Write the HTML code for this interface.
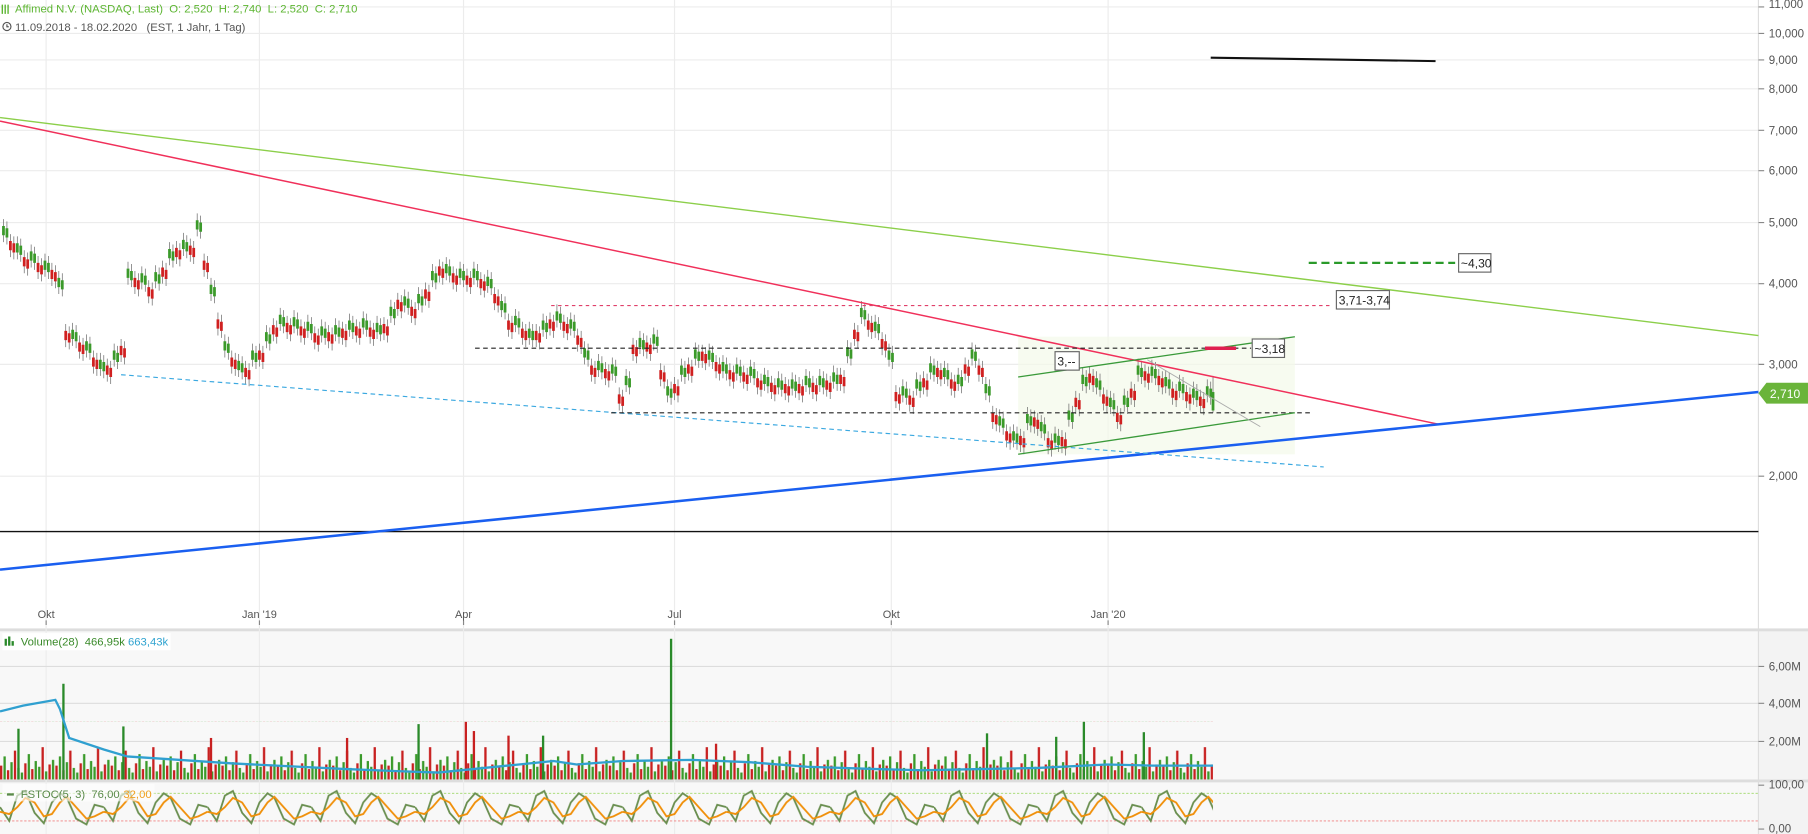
<!DOCTYPE html>
<html><head><meta charset="utf-8"><style>
html,body{margin:0;padding:0;background:#fff;overflow:hidden}
svg{display:block;font-family:"Liberation Sans",Arial,sans-serif}
</style></head><body>
<svg width="1808" height="834" viewBox="0 0 1568 723.3" xmlns="http://www.w3.org/2000/svg">
<defs>
<pattern id="vp" patternUnits="userSpaceOnUse" x="0" y="626" width="48" height="50">
<g fill="#c82020"><rect x="0" y="38" width="2" height="12"/><rect x="6" y="42" width="2" height="8"/><rect x="12" y="25" width="2" height="25"/><rect x="21" y="36" width="2" height="14"/><rect x="27" y="41" width="2" height="9"/><rect x="36" y="22" width="2" height="28"/><rect x="42" y="37" width="2" height="13"/></g>
<g fill="#3a9a2a"><rect x="3" y="30" width="2" height="20"/><rect x="9" y="35" width="2" height="15"/><rect x="15" y="40" width="2" height="10"/><rect x="18" y="44" width="2" height="6"/><rect x="24" y="28" width="2" height="22"/><rect x="30" y="34" width="2" height="16"/><rect x="33" y="39" width="2" height="11"/><rect x="39" y="43" width="2" height="7"/><rect x="45" y="33" width="2" height="17"/></g>
</pattern>
<pattern id="sp" patternUnits="userSpaceOnUse" x="0" y="678" width="90" height="46">
<path d="M0 22L8 34L15 12L22 8L30 27L38 36L45 18L52 10L58 14L66 32L75 37L82 20L90 22" fill="none" stroke="#6a8f50" stroke-width="1.6"/>
<path d="M0 26L8 28L15 22L22 14L30 18L38 30L45 28L52 18L58 13L66 22L75 32L82 30L90 26" fill="none" stroke="#f0900a" stroke-width="1.6"/>
</pattern>
</defs>
<rect x="0" y="0" width="1568" height="723.3" fill="#fff"/>
<rect x="0" y="547" width="1525" height="129" fill="#f8f8f8"/>
<rect x="0" y="678" width="1525" height="46" fill="#f8f8f8"/>
<rect x="1525" y="547" width="43" height="177" fill="#f3f3f3"/>
<rect x="0" y="545" width="1568" height="2.5" fill="#ddd"/>
<rect x="0" y="676" width="1568" height="2.5" fill="#ddd"/>
<line x1="1525" y1="0" x2="1525" y2="724" stroke="#ddd"/>
<g stroke="#ececec">
<line x1="0" y1="6" x2="1525" y2="6"/><line x1="0" y1="29" x2="1525" y2="29"/><line x1="0" y1="52" x2="1525" y2="52"/><line x1="0" y1="77" x2="1525" y2="77"/><line x1="0" y1="113" x2="1525" y2="113"/><line x1="0" y1="148" x2="1525" y2="148"/><line x1="0" y1="193" x2="1525" y2="193"/><line x1="0" y1="246" x2="1525" y2="246"/><line x1="0" y1="316" x2="1525" y2="316"/><line x1="0" y1="413" x2="1525" y2="413"/>
<line x1="40" y1="0" x2="40" y2="724"/><line x1="225" y1="0" x2="225" y2="724"/><line x1="402" y1="0" x2="402" y2="724"/><line x1="585" y1="0" x2="585" y2="724"/><line x1="773" y1="0" x2="773" y2="724"/><line x1="961" y1="0" x2="961" y2="724"/>
</g>
<g stroke="#ddd"><line x1="0" y1="578" x2="1525" y2="578"/><line x1="0" y1="610" x2="1525" y2="610"/><line x1="0" y1="643" x2="1525" y2="643"/></g>
<g font-size="9.5" fill="#555">
<g stroke="#888"><path d="M1525 6h5M1525 29h5M1525 52h5M1525 77h5M1525 113h5M1525 148h5M1525 193h5M1525 246h5M1525 316h5M1525 413h5M1525 578h5M1525 610h5M1525 643h5M1525 681h5M1525 719h5M40 538v4M225 538v4M402 538v4M585 538v4M773 538v4M961 538v4"/></g>
<g font-size="10"><text x="1534" y="7">11,000</text><text x="1534" y="32.5">10,000</text><text x="1534" y="55.5">9,000</text><text x="1534" y="80.5">8,000</text><text x="1534" y="116.5">7,000</text><text x="1534" y="151.5">6,000</text><text x="1534" y="196.5">5,000</text><text x="1534" y="249.5">4,000</text><text x="1534" y="319.5">3,000</text><text x="1534" y="416.5">2,000</text>
<text x="1534" y="581.5">6,00M</text><text x="1534" y="613.5">4,00M</text><text x="1534" y="646.5">2,00M</text><text x="1534" y="684">100,00</text><text x="1534" y="722">0,00</text></g>
<g text-anchor="middle"><text x="40" y="536">Okt</text><text x="225" y="536">Jan '19</text><text x="402" y="536">Apr</text><text x="585" y="536">Jul</text><text x="773" y="536">Okt</text><text x="961" y="536">Jan '20</text></g>
</g>
<rect x="0" y="626" width="1052" height="50" fill="url(#vp)"/>
<g fill="#2a8a2a"><rect x="54" y="593" width="2" height="83"/><rect x="581" y="554" width="2" height="122"/><rect x="106" y="630" width="2" height="46"/><rect x="362" y="628" width="2" height="48"/><rect x="855" y="636" width="2" height="40"/><rect x="939" y="626" width="2" height="50"/><rect x="991" y="635" width="2" height="41"/><rect x="15" y="632" width="2" height="44"/><rect x="470" y="638" width="2" height="38"/><rect x="915" y="639" width="2" height="37"/></g>
<g fill="#c82020"><rect x="403" y="626" width="2" height="50"/><rect x="410" y="634" width="2" height="42"/><rect x="182" y="640" width="2" height="36"/><rect x="300" y="640" width="2" height="36"/><rect x="440" y="638" width="2" height="38"/><rect x="620" y="645" width="2" height="31"/></g>
<path d="M0 617 L20 612 L48 607 L52 615 L60 640 L90 650 L110 656 L140 658 L200 662 L240 664 L300 667 L350 669 L380 670 L420 666 L450 663 L480 660 L500 663 L540 660 L600 659 L650 661 L700 665 L760 667 L800 668 L850 667 L900 666 L960 663 L1000 664 L1052 664" fill="none" stroke="#30a0d0" stroke-width="2"/>
<line x1="0" y1="688" x2="1525" y2="688" stroke="#9fd86a" stroke-dasharray="2,1.5" stroke-width=".8"/>
<line x1="0" y1="712" x2="1525" y2="712" stroke="#f08080" stroke-dasharray="2,1.5" stroke-width=".8"/>
<rect x="0" y="678" width="1052" height="46" fill="url(#sp)"/>
<rect x="883" y="292" width="240" height="102" fill="#f3f9ea" opacity=".7"/>
<g id="cd">
<path stroke="#666" stroke-width=".6" fill="none" d="M3 190v20M9 203v20M15 205v20M21 217v20M27 212v20M33 222v20M39 220v20M45 228v20M51 235v20M57 281v20M63 280v20M69 291v20M75 290v20M81 304v20M87 306v20M93 311v20M99 298v20M105 294v20M111 227v20M117 235v20M123 231v20M129 243v20M135 230v20M141 226v20M147 210v20M153 209v20M159 202v20M165 207v20M171 185v20M177 220v20M183 241v20M189 271v20M195 290v20M201 304v20M207 307v20M213 313v20M219 298v20M225 298v20M231 282v20M237 276v20M243 267v20M249 274v20M255 269v20M261 277v20M267 273v20M273 283v20M279 277v20M285 282v20M291 276v20M297 279v20M303 272v20M309 277v20M315 270v20M321 278v20M327 274v20M333 275v20M339 260v20M345 254v20M351 251v20M357 260v20M363 249v20M369 245v20M375 229v20M381 225v20M387 223v20M393 231v20M399 227v20M405 233v20M411 227v20M417 236v20M423 234v20M429 249v20M435 255v20M441 272v20M447 268v20M453 279v20M459 279v20M465 281v20M471 272v20M477 271v20M483 264v20M489 273v20M495 271v20M501 285v20M507 296v20M513 311v20M519 307v20M525 314v20M531 310v20M537 336v20M543 320v20M549 293v20M555 287v20M561 291v20M567 284v20M573 315v20M579 329v20M585 327v20M591 311v20M597 310v20M603 297v20M609 299v20M615 298v20M621 308v20M627 308v20M633 315v20M639 310v20M645 317v20M651 312v20M657 322v20M663 319v20M669 326v20M675 322v20M681 327v20M687 323v20M693 327v20M699 320v20M705 326v20M711 320v20M717 324v20M723 317v20M729 319v20M735 295v20M741 280v20M747 261v20M753 272v20M759 273v20M765 288v20M771 298v20M777 334v20M783 329v20M789 337v20M795 323v20M801 322v20M807 309v20M813 313v20M819 313v20M825 323v20M831 319v20M837 310v20M843 297v20M849 311v20M855 327v20M861 352v20M867 355v20M873 368v20M879 368v20M885 372v20M891 353v20M897 356v20M903 360v20M909 374v20M915 370v20M921 373v20M927 350v20M933 339v20M939 319v20M945 318v20M951 322v20M957 336v20M963 339v20M969 352v20M975 337v20M981 331v20M987 311v20M993 316v20M999 312v20M1005 320v20M1011 321v20M1017 331v20M1023 325v20M1029 334v20M1035 331v20M1041 338v20M1047 329v20"/>
<path stroke="#3b9a2a" stroke-width="2.4" fill="none" d="M3 196v8M15 211v8M27 218v8M39 226v8M51 241v8M63 286v8M75 296v8M87 312v8M99 304v8M111 233v8M123 237v8M135 236v8M147 216v8M159 208v8M171 191v8M183 247v8M195 296v8M207 313v8M219 304v8M231 288v8M243 273v8M255 275v8M267 279v8M279 283v8M291 282v8M303 278v8M315 276v8M327 280v8M339 266v8M351 257v8M363 255v8M375 235v8M387 229v8M399 233v8M411 233v8M423 240v8M435 261v8M447 274v8M459 285v8M471 278v8M483 270v8M495 277v8M507 302v8M519 313v8M531 316v8M543 326v8M555 293v8M567 290v8M579 335v8M591 317v8M603 303v8M615 304v8M627 314v8M639 316v8M651 318v8M663 325v8M675 328v8M687 329v8M699 326v8M711 326v8M723 323v8M735 301v8M747 267v8M759 279v8M771 304v8M783 335v8M795 329v8M807 315v8M819 319v8M831 325v8M843 303v8M855 333v8M867 361v8M879 374v8M891 359v8M903 366v8M915 376v8M927 356v8M939 325v8M951 328v8M963 345v8M975 343v8M987 317v8M999 318v8M1011 327v8M1023 331v8M1035 337v8M1047 335v8"/>
<path stroke="#d02020" stroke-width="2.4" fill="none" d="M9 209v8M21 223v8M33 228v8M45 234v8M57 287v8M69 297v8M81 310v8M93 317v8M105 300v8M117 241v8M129 249v8M141 232v8M153 215v8M165 213v8M177 226v8M189 277v8M201 310v8M213 319v8M225 304v8M237 282v8M249 280v8M261 283v8M273 289v8M285 288v8M297 285v8M309 283v8M321 284v8M333 281v8M345 260v8M357 266v8M369 251v8M381 231v8M393 237v8M405 239v8M417 242v8M429 255v8M441 278v8M453 285v8M465 287v8M477 277v8M489 279v8M501 291v8M513 317v8M525 320v8M537 342v8M549 299v8M561 297v8M573 321v8M585 333v8M597 316v8M609 305v8M621 314v8M633 321v8M645 323v8M657 328v8M669 332v8M681 333v8M693 333v8M705 332v8M717 330v8M729 325v8M741 286v8M753 278v8M765 294v8M777 340v8M789 343v8M801 328v8M813 319v8M825 329v8M837 316v8M849 317v8M861 358v8M873 374v8M885 378v8M897 362v8M909 380v8M921 379v8M933 345v8M945 324v8M957 342v8M969 358v8M981 337v8M993 322v8M1005 326v8M1017 337v8M1029 340v8M1041 344v8"/>
</g>
<use href="#cd" transform="translate(3,2)"/>
<path stroke="#666" stroke-width=".6" d="M1052 326v32"/>
<path stroke="#3b9a2a" stroke-width="2.4" d="M1052 340v16"/>
<g fill="none">
<line x1="0" y1="461" x2="1525" y2="461" stroke="#111" stroke-width="1.2"/>
<line x1="1050" y1="50" x2="1245" y2="53" stroke="#111" stroke-width="1.8"/>
<line x1="0" y1="102" x2="1525" y2="291" stroke="#8ccf4a" stroke-width="1.2"/>
<line x1="0" y1="105" x2="1248" y2="368" stroke="#f0305a" stroke-width="1.3"/>
<line x1="0" y1="494" x2="1525" y2="340" stroke="#1a5ff0" stroke-width="2.2"/>
<line x1="105" y1="325" x2="1148" y2="405" stroke="#3aa8e0" stroke-width="1" stroke-dasharray="4,3"/>
<line x1="412" y1="302" x2="1085" y2="302" stroke="#222" stroke-width="1" stroke-dasharray="4,3"/>
<line x1="530" y1="358" x2="1138" y2="358" stroke="#222" stroke-width="1" stroke-dasharray="4,3"/>
<line x1="478" y1="265" x2="1155" y2="265" stroke="#e0406a" stroke-width="1" stroke-dasharray="3,3"/>
<line x1="1135" y1="228" x2="1262" y2="228" stroke="#2a9a2a" stroke-width="2" stroke-dasharray="7,4"/>
<line x1="883" y1="327" x2="1123" y2="292" stroke="#3a9a3a" stroke-width="1.1"/>
<line x1="883" y1="394" x2="1123" y2="358" stroke="#3a9a3a" stroke-width="1.1"/>
<line x1="995" y1="312" x2="1093" y2="370" stroke="#aaa" stroke-width=".8"/>
<line x1="1045" y1="302" x2="1072" y2="302" stroke="#e02050" stroke-width="3"/>
</g>
<g font-size="10.5" fill="#222">
<rect x="915" y="305" width="21" height="16" fill="#fff" stroke="#666"/><text x="917" y="317">3,--</text>
<rect x="1086" y="294" width="28" height="16" fill="#fff" stroke="#666"/><text x="1088" y="306">~3,18</text>
<rect x="1159" y="252" width="46" height="16" fill="#fff" stroke="#666"/><text x="1161" y="264">3,71-3,74</text>
<rect x="1265" y="220" width="28" height="16" fill="#fff" stroke="#666"/><text x="1267" y="232">~4,30</text>
</g>
<path d="M1525 341 L1532 332 L1568 332 L1568 350 L1532 350 Z" fill="#6ab43a"/>
<text x="1535" y="345" font-size="10.5" fill="#fff">2,710</text>
<g font-size="9.8">
<g stroke="#5cb531" stroke-width="1.2" fill="none"><path d="M2 4v8M4.5 4v8M7 4v8"/></g>
<text x="13" y="11" fill="#5cb531">Affimed N.V. (NASDAQ, Last)&#160; O: 2,520&#160; H: 2,740&#160; L: 2,520&#160; C: 2,710</text>
<circle cx="6" cy="23" r="3.5" fill="none" stroke="#555"/><path d="M6 21v2.2h1.6" stroke="#555" fill="none"/>
<text x="13" y="27" fill="#555">11.09.2018 - 18.02.2020&#160;&#160; (EST, 1 Jahr, 1 Tag)</text>
<rect x="2" y="549" width="146" height="15" fill="#fff" opacity=".9"/>
<rect x="4" y="554" width="2" height="6" fill="#2a8a2a"/><rect x="7" y="552" width="2" height="8" fill="#2a8a2a"/><rect x="10" y="556" width="2" height="4" fill="#2a8a2a"/>
<text x="18" y="560" fill="#3a8a2a">Volume(28)&#160; 466,95k</text><text x="111" y="560" fill="#2fa3d0">663,43k</text>
<rect x="2" y="680" width="132" height="15" fill="#fff" opacity=".6"/>
<rect x="6" y="688" width="6" height="2" fill="#5a8a4a"/>
<text x="18" y="692" fill="#5a8a4a">FSTOC(5, 3)&#160; 76,00</text><text x="107" y="692" fill="#f0a020">32,00</text>
</g>
</svg>
</body></html>
